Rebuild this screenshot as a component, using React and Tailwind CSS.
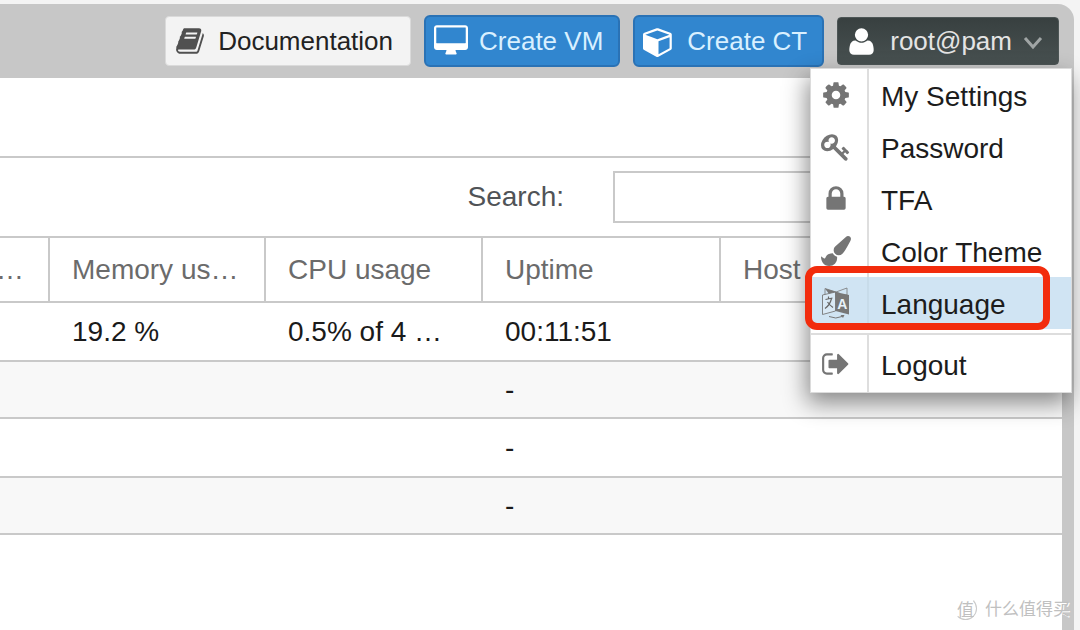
const PATHS = {
  user: 'M1600 1405q0 120-73 189.5t-194 69.5h-874q-121 0-194-69.5t-73-189.5q0-53 3.5-103.5t14-109 26.5-108.5 43-97.5 62-81 85.5-53.5 111.5-20q9 0 42 21.5t74.5 48 108 48 133.5 21.5 133.5-21.5 108-48 74.5-48 42-21.5q61 0 111.5 20t85.5 53.5 62 81 43 97.5 26.5 108.5 14 109 3.5 103.5zm-320-893q0 159-112.5 271.5t-271.5 112.5-271.5-112.5-112.5-271.5 112.5-271.5 271.5-112.5 271.5 112.5 112.5 271.5z',
  cog: 'M1152 896q0-106-75-181t-181-75-181 75-75 181 75 181 181 75 181-75 75-181zm512-109v222q0 12-8 23t-20 13l-185 28q-19 54-39 91 35 50 107 138 10 12 10 25t-9 23q-27 37-99 108t-94 71q-12 0-26-9l-138-108q-44 23-91 38-16 136-29 186-7 28-36 28h-222q-14 0-24.5-8.5t-11.5-21.5l-28-184q-49-16-90-37l-141 107q-10 9-25 9-14 0-25-11-126-114-165-168-7-10-7-23 0-12 8-23 15-21 51-66.5t54-70.5q-27-50-41-99l-183-27q-13-2-21-12.5t-8-23.5v-222q0-12 8-23t19-13l186-28q14-46 39-92-40-57-107-138-10-12-10-24 0-10 9-23 26-36 98.5-107.5t94.5-71.5q13 0 26 10l138 107q44-23 91-38 16-136 29-186 7-28 36-28h222q14 0 24.5 8.5t11.5 21.5l28 184q49 16 90 37l142-107q9-9 24-9 13 0 25 10 129 119 165 170 7 8 7 22 0 12-8 23-15 21-51 66.5t-54 70.5q26 50 41 98l183 28q13 2 21 12.5t8 23.5z',
  key: 'M832 512q0-80-56-136t-136-56-136 56-56 136q0 42 19 83-41-19-83-19-80 0-136 56t-56 136 56 136 136 56 136-56 56-136q0-42-19-83 41 19 83 19 80 0 136-56t56-136zm851 704q0 17-49 66t-66 49q-9 0-28.5-16t-36.5-33-38.5-40-24.5-26l-96 96 220 220q28 28 28 68 0 42-39 81t-81 39q-40 0-68-28l-671-671q-176 131-365 131-163 0-265.5-102.5t-102.5-265.5q0-160 95-313t248-248 313-95q163 0 265.5 102.5t102.5 265.5q0 189-131 365l355 355 96-96q-3-3-26-24.5t-40-38.5-33-36.5-16-28.5q0-17 49-66t66-49q13 0 23 10 6 6 46 44.5t82 79.5 86.5 86 73 78 28.5 41z',
  lock: 'M640 768h512v-192q0-106-75-181t-181-75-181 75-75 181v192zm832 96v576q0 40-28 68t-68 28h-960q-40 0-68-28t-28-68v-576q0-40 28-68t68-28h32v-192q0-184 132-316t316-132 316 132 132 316v192h32q40 0 68 28t28 68z',
  cube: 'M896 1629l640-349v-636l-640 233v752zm-64-865l698-254-698-254-698 254zm832-252v768q0 35-18 65t-49 47l-704 384q-28 16-61 16t-61-16l-704-384q-31-17-49-47t-18-65v-768q0-40 23-73t61-47l704-256q22-8 44-8t44 8l704 256q38 14 61 47t23 73z',
  desktop: 'M1728 992v-832q0-13-9.5-22.5t-22.5-9.5h-1600q-13 0-22.5 9.5t-9.5 22.5v832q0 13 9.5 22.5t22.5 9.5h1600q13 0 22.5-9.5t9.5-22.5zm128-832v1088q0 66-47 113t-113 47h-544q0 37 16 77.5t32 71 16 43.5q0 26-19 45t-45 19h-512q-26 0-45-19t-19-45q0-14 16-44t32-70 16-78h-544q-66 0-113-47t-47-113v-1088q0-66 47-113t113-47h1600q66 0 113 47t47 113z',
  book: 'M1703 478q40 57 18 129l-275 906q-19 64-76.5 107.5t-122.5 43.5h-923q-77 0-148.5-53.5t-99.5-131.5q-24-67-2-127 0-4 3-27t4-37q1-8-3-21.5t-3-19.5q2-11 8-21t16.5-23.5 16.5-23.5q23-38 45-91.5t30-91.5q3-10 .5-30t-.5-28q3-11 17-28t17-23q21-36 42-92t25-90q1-9-2.5-32t.5-28q4-13 22-30.5t22-22.5q19-26 42.5-84.5t27.5-96.5q1-8-3-25.5t-2-26.5q2-8 9-18t18-23 17-21q8-12 16.5-30.5t15-35 16-36 19.5-32 26.5-23.5 36-11.5 47.5 5.5l-1 3q38-9 51-9h761q74 0 114 56t18 130l-274 906q-36 119-71.5 153.5t-128.5 34.5h-869q-27 0-38 15-11 16-1 43 24 70 144 70h923q29 0 56-15.5t35-41.5l300-987q7-22 5-57 38 15 59 43zm-1064 2q-4 13 2 22.5t20 9.5h608q13 0 25.5-9.5t16.5-22.5l21-64q4-13-2-22.5t-20-9.5h-608q-13 0-25.5 9.5t-16.5 22.5zm-83 256q-4 13 2 22.5t20 9.5h608q13 0 25.5-9.5t16.5-22.5l21-64q4-13-2-22.5t-20-9.5h-608q-13 0-25.5 9.5t-16.5 22.5z',
  brush: 'M1615 0q70 0 122.5 46.5t52.5 116.5q0 63-45 151-332 629-465 752-97 91-218 91-126 0-216.5-92.5t-90.5-219.5q0-128 92-212l638-579q59-54 130-54zm-909 1034q39 76 106.5 130t150.5 76l1 71q4 213-129.5 347t-348.5 134q-123 0-218-46.5t-152.5-127.5-86.5-183-29-220q7 5 41 30t62 44.5 59 36.5 46 17q41 0 55-37 25-66 57.5-112.5t69.5-76 88-47.5 103-25.5 125-10.5z',
  signOut: 'M704 1440q0 4 1 20t.5 26.5-3 23.5-10 19.5-20.5 6.5h-320q-119 0-203.5-84.5t-84.5-203.5v-704q0-119 84.5-203.5t203.5-84.5h320q13 0 22.5 9.5t9.5 22.5q0 4 1 20t.5 26.5-3 23.5-10 19.5-20.5 6.5h-320q-66 0-113 47t-47 113v704q0 66 47 113t113 47h312l11.5 1 11.5 3 8 5.5 7 9 2 13.5zm928-544q0 26-19 45l-544 544q-19 19-45 19t-45-19-19-45v-288h-448q-26 0-45-19t-19-45v-384q0-26 19-45t45-19h448v-288q0-26 19-45t45-19 45 19l544 544q19 19 19 45z',
};

function Icon({ name, viewBox = '0 0 1792 1792', className = 'size-[30px]' }) {
  return (
    <svg viewBox={viewBox} className={`shrink-0 ${className}`} fill="currentColor" aria-hidden="true">
      <path d={PATHS[name]} />
    </svg>
  );
}

function LanguageIcon() {
  return (
    <svg viewBox="0 0 30 32" className="h-8 w-[30px] shrink-0" aria-hidden="true">
      <path d="M4 1.500 L15 5 L26 1 V8 L15 9 L4 8Z" fill="#d0e4f3" stroke="#777" strokeWidth="0.8" />
      <path d="M4 1.500 L19 6 L15 9 L8 7Z" fill="#777" />
      <path d="M1.500 8 L14.500 5 V24 L1.500 27.500Z" fill="#d9e9f5" stroke="#777" strokeWidth="0.9" />
      <path d="M14.500 5 L28 8 V27.500 L14.500 24Z" fill="#777" />
      <path d="M4.500 12.500 L11.500 11 M7.500 9.500 V12 M10.500 11.500 Q9 18 4 21.500 M6.500 15 Q8.500 18 12 20.500" fill="none" stroke="#666" strokeWidth="1.200" />
      <text x="21.300" y="21.500" textAnchor="middle" fontSize="14" fontWeight="bold" fontFamily="Liberation Sans, sans-serif" fill="#e8f2fa">A</text>
      <path d="M8 29.500 Q15 32.500 21 29.500" fill="none" stroke="#777" strokeWidth="1" />
      <path d="M19.500 28 L23.500 28 L22 31Z" fill="#777" />
    </svg>
  );
}

const MENU = [
  { label: 'My Settings', icon: <Icon name="cog" /> },
  { label: 'Password', icon: <Icon name="key" /> },
  { label: 'TFA', icon: <Icon name="lock" /> },
  { label: 'Color Theme', icon: <Icon name="brush" /> },
  { label: 'Language', icon: <LanguageIcon />, active: true },
  { label: 'Logout', icon: <Icon name="signOut" />, separated: true },
];

function UserMenu() {
  return (
    <ul role="menu" className="absolute -right-[13px] top-full z-10 mt-[3px] w-[262px] border border-[#dcdcdc] bg-white text-[28px] leading-[48px] text-[#1c1c1c] shadow-[-3px_10px_22px_rgba(0,0,0,0.45)]">
      {MENU.map(({ label, icon, active, separated }) => (
        <li key={label} role="none" className={separated ? 'border-t-2 border-[#dddddd]' : active ? 'relative pb-1' : ''}>
          <button
            type="button"
            role="menuitem"
            className={`flex w-full items-stretch text-left ${active ? 'bg-[#d0e4f3]' : ''}`}
          >
            <span className={`flex w-[58px] items-center border-r-2 pl-[10px] text-[#757575] ${active ? 'border-[#c8dcea]' : 'border-[#dedede]'}`}>
              {icon}
            </span>
            <span className={separated ? 'pb-[2px] pl-3 pt-[7px]' : 'pl-3 pt-1'}>{label}</span>
          </button>
          {active && (
            <span className="pointer-events-none absolute -left-[6px] -top-[11px] bottom-[3px] right-[21px] rounded-[12px] border-[7px] border-[#f22c0d]" />
          )}
        </li>
      ))}
    </ul>
  );
}

const COLUMNS = ['…', 'Memory us…', 'CPU usage', 'Uptime', 'Host'];
const ROWS = [
  ['', '19.2 %', '0.5% of 4 …', '00:11:51', ''],
  ['', '', '', '-', ''],
  ['', '', '', '-', ''],
  ['', '', '', '-', ''],
];

export default function App() {
  return (
    <div className="flex min-h-screen flex-col overflow-hidden bg-[#f4f4f4] pr-[6px] pt-1 font-['Liberation_Sans',Arial,sans-serif]">
      <div className="flex grow flex-col rounded-tr-[16px] bg-[#c7c7c7]">
        <header className="flex h-[74px] items-center justify-end gap-[13px] pr-[15px] text-[26px]">
          <button type="button" className="flex h-[50px] items-center gap-[13px] rounded-[4px] border border-[#dadada] bg-[#f3f3f3] pl-[9px] pr-[17px] text-[#222222]">
            <Icon name="book" className="size-[30px] text-[#505050]" />
            Documentation
          </button>
          <button type="button" className="flex h-[52px] items-center gap-[11px] rounded-[6px] border-2 border-[#2a72b5] bg-[#3186cf] pl-2 pr-[15px] text-[#d9f0ff]">
            <Icon name="desktop" viewBox="-64 0 1920 1792" className="h-[32px] w-[34px] text-white" />
            Create VM
          </button>
          <button type="button" className="flex h-[52px] items-center gap-[13px] rounded-[6px] border-2 border-[#2a72b5] bg-[#3186cf] pl-2 pr-[15px] text-[#d9f0ff]">
            <Icon name="cube" className="size-[31px] text-white" />
            Create CT
          </button>
          <div className="relative">
            <button type="button" aria-haspopup="menu" aria-expanded="true" className="flex h-12 items-center rounded-[4px] border border-[#4d5656] bg-linear-to-b from-[#384040] to-[#485151] pl-2 pr-[15px] text-[#e4e4e4]">
              <Icon name="user" className="mr-[13px] size-[31px] text-white" />
              root@pam
              <svg viewBox="0 0 20 14" className="ml-[11px] mt-1 h-[14px] w-5" fill="none" stroke="#a0a5a5" strokeWidth="3" aria-hidden="true">
                <path d="M2 2l8 9 8-9" />
              </svg>
            </button>
            <UserMenu />
          </div>
        </header>

        <main className="mr-3 grow bg-white">
          <div className="h-20 border-b-2 border-[#c9c9c9]" />
          <div className="flex h-[78px] items-center justify-end pr-[22px]">
            <label htmlFor="search" className="pr-[49px] text-[28px] text-[#505357]">Search:</label>
            <input id="search" type="text" className="h-[52px] w-[427px] border-2 border-[#c9c9c9] bg-white px-3 text-[28px] outline-none" />
          </div>
          <table className="w-full table-fixed border-separate border-spacing-0 text-left text-[28px]">
            <colgroup>
              <col className="w-[50px]" />
              <col className="w-[216px]" />
              <col className="w-[217px]" />
              <col className="w-[238px]" />
              <col />
            </colgroup>
            <thead>
              <tr className="h-[67px] text-[#6b6b6b]">
                {COLUMNS.map((c, i) => (
                  <th key={c} className={`border-y-2 border-[#c9c9c9] p-0 font-normal ${i === 0 ? 'border-r-2 -indent-1' : i === 4 ? 'pl-[22px]' : 'border-r-2 pl-[22px]'}`}>
                    {c}
                  </th>
                ))}
              </tr>
            </thead>
            <tbody>
              {ROWS.map((row, r) => (
                <tr key={r} className={`text-[#1a1a1a] ${r % 2 ? 'h-[57px] bg-[#f8f8f8]' : 'h-[59px]'}`}>
                  {row.map((cell, i) => (
                    <td key={i} className="whitespace-nowrap border-b-2 border-[#c9c9c9] p-0 pl-[22px]">{cell}</td>
                  ))}
                </tr>
              ))}
            </tbody>
          </table>
        </main>
      </div>

      <div className="absolute bottom-[10px] right-[10px] flex items-center gap-2 font-['Noto_Sans_CJK_SC',sans-serif] text-[#c0c0c0]">
        <span className="flex size-[23px] items-center justify-center rounded-full border border-[#c8c8c8] border-l-transparent border-t-transparent text-[17px] leading-none">值</span>
        <span className="text-[17px] leading-6 [text-shadow:1px_1px_0_#ffffff]">什么值得买</span>
      </div>
    </div>
  );
}
